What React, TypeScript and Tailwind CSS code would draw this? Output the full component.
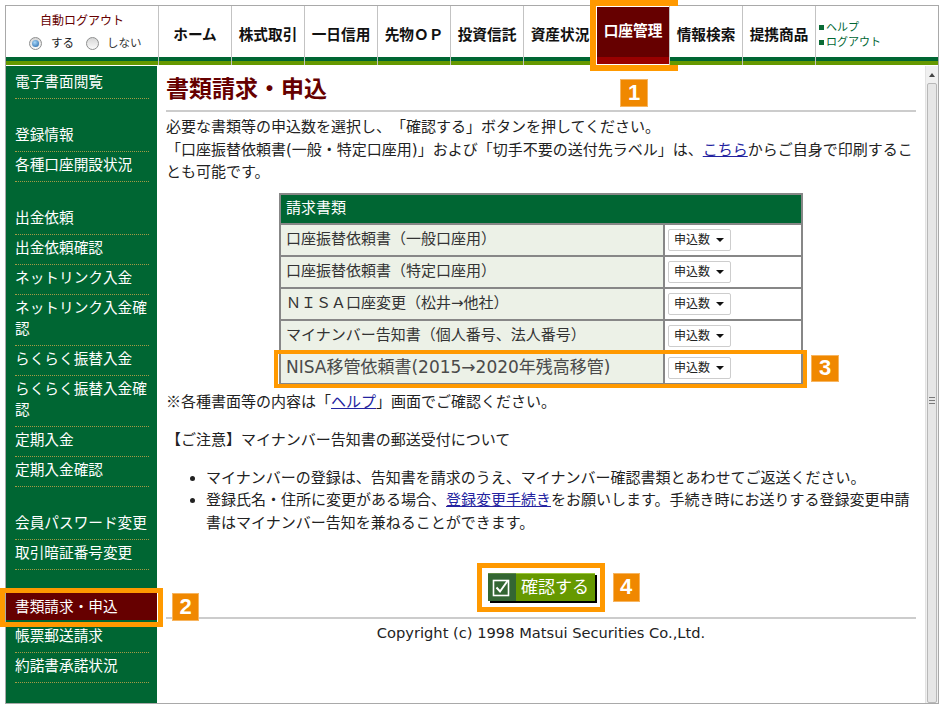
const navItems = ['ホーム', '株式取引', '一日信用', '先物ＯＰ', '投資信託', '資産状況', '口座管理', '情報検索', '提携商品'];

type SideItem = { label: string; active?: boolean } | 'gap';

const sideItems: SideItem[] = [
  { label: '電子書面閲覧' },
  'gap',
  { label: '登録情報' },
  { label: '各種口座開設状況' },
  'gap',
  { label: '出金依頼' },
  { label: '出金依頼確認' },
  { label: 'ネットリンク入金' },
  { label: 'ネットリンク入金確認' },
  { label: 'らくらく振替入金' },
  { label: 'らくらく振替入金確認' },
  { label: '定期入金' },
  { label: '定期入金確認' },
  'gap',
  { label: '会員パスワード変更' },
  { label: '取引暗証番号変更' },
  'gap',
  { label: '書類請求・申込', active: true },
  { label: '帳票郵送請求' },
  { label: '約諾書承諾状況' },
];

const docRows = [
  '口座振替依頼書（一般口座用）',
  '口座振替依頼書（特定口座用）',
  'ＮＩＳＡ口座変更（松井→他社）',
  'マイナンバー告知書（個人番号、法人番号）',
];

function Badge({ n, className }: { n: number; className: string }) {
  return (
    <div
      className={`absolute flex items-center justify-center border border-[#f7b560] bg-[#f08800] font-['Liberation_Sans',sans-serif] text-[22px] font-bold leading-none text-white ${className}`}
    >
      {n}
    </div>
  );
}

function Stripes({ active }: { active?: boolean }) {
  if (active) return <div className="h-[8px] bg-[#990000]" />;
  return (
    <>
      <div className="h-[4px] bg-[#006633]" />
      <div className="h-[4px] bg-[#669900]" />
    </>
  );
}

function Radio({ checked }: { checked?: boolean }) {
  return (
    <span className="flex h-[13px] w-[13px] items-center justify-center rounded-full border border-[#8e8f8f] bg-[linear-gradient(#d6d6d6,#fbfbfb)]">
      {checked && (
        <span className="h-[7px] w-[7px] rounded-full bg-[radial-gradient(circle_at_40%_35%,#a8d8fa,#1b5fa3)]" />
      )}
    </span>
  );
}

function Select() {
  return (
    <div className="flex h-[22px] w-[63px] items-center justify-between rounded-[2px] border border-[#cdcdcd] bg-white pl-[5px] pr-[6px] text-[12px] leading-[16px] text-[#222]">
      <span>申込数</span>
      <span className="h-0 w-0 border-x-[4px] border-t-[4px] border-x-transparent border-t-[#111]" />
    </div>
  );
}

function Header() {
  return (
    <div className="flex h-[59px]">
      {/* auto logout */}
      <div className="flex w-[152px] flex-col">
        <div className="flex h-[51px] flex-col pt-[7px]">
          <div className="text-center text-[12px] leading-[16px] text-[#660000]">自動ログアウト</div>
          <div className="mt-[6px] flex items-center pl-[23px] text-[11.5px] leading-[16px] text-[#222]">
            <Radio checked />
            <span className="ml-[9px]">する</span>
            <span className="ml-[12px]">
              <Radio />
            </span>
            <span className="ml-[8px] text-[#333]">しない</span>
          </div>
        </div>
        <Stripes />
      </div>

      {navItems.map((item) => {
        const active = item === '口座管理';
        return (
          <div key={item} className="relative flex w-[73px] flex-col border-l border-[#c3c3c3]">
            <div
              className={`h-[51px] text-center text-[14.67px] font-bold leading-[21px] ${
                active ? 'bg-[#660000] pt-[14px] text-white' : 'bg-white pt-[18px] text-[#111]'
              }`}
            >
              {item}
            </div>
            <Stripes active={active} />
            {active && (
              <>
                <div className="absolute left-[-7px] top-[-6px] h-[71px] w-[88px] border-[6px] border-[#ff9900] shadow-[inset_0_0_0_1px_#fff]" />
                <Badge n={1} className="left-[23px] top-[73px] h-[28px] w-[28px]" />
              </>
            )}
          </div>
        );
      })}

      {/* help / logout */}
      <div className="flex w-[123px] flex-col border-l border-[#c3c3c3]">
        <div className="h-[51px] pl-[3px] pt-[14px] text-[11px] leading-[15px] text-[#006633]">
          <div className="flex items-center gap-[2px]">
            <span className="h-[5px] w-[5px] bg-[#0b6b36]" />
            ヘルプ
          </div>
          <div className="flex items-center gap-[2px]">
            <span className="h-[5px] w-[5px] bg-[#0b6b36]" />
            ログアウト
          </div>
        </div>
        <Stripes />
      </div>
    </div>
  );
}

function Sidebar() {
  return (
    <div className="w-[151px] bg-[#006633] pt-[3px] text-[14.67px] leading-[21px] text-white">
      {sideItems.map((item, i) => {
        if (item === 'gap') return <div key={i} className="h-[23px]" />;
        if (item.active) {
          return (
            <div key={i} className="relative mb-[3px] flex h-[27px] items-center bg-[#660000] pl-[9px]">
              {item.label}
              <div className="absolute left-[-6px] top-[-5px] h-[39px] w-[163px] border-[5px] border-[#ff9900]" />
              <Badge n={2} className="left-[166px] top-0 h-[28px] w-[27px]" />
            </div>
          );
        }
        return (
          <div key={i} className="ml-[9px] w-[134px] border-b border-dotted border-[#a39a45] pb-[6px] pt-[2px]">
            {item.label}
          </div>
        );
      })}
    </div>
  );
}

function Main() {
  return (
    <div className="flex w-[768px] flex-col px-[9px] pt-[8px] text-[15px] text-[#222]">
      <h1 className="text-[23px] font-bold leading-[30px] text-[#660000]">書類請求・申込</h1>
      <div className="mt-[6px] h-[2px] bg-[#cccccc]" />

      <p className="mt-[4px] leading-[22.5px]">
        必要な書類等の申込数を選択し、「確認する」ボタンを押してください。
        <br />
        「口座振替依頼書(一般・特定口座用)」および「切手不要の送付先ラベル」は、
        <a className="text-[#2323a0] underline">こちら</a>
        からご自身で印刷することも可能です。
      </p>

      {/* document table */}
      <div className="relative mx-auto mt-[9px] w-[524px] bg-[#878787] p-[2px]">
        <div className="flex h-[28px] items-center bg-[#006633] pl-[5px] leading-[21px] text-white">請求書類</div>
        {docRows.map((row) => (
          <div key={row} className="mt-[2px] flex h-[30px] gap-[2px]">
            <div className="flex w-[382px] items-center bg-[#ecf1e7] pl-[5px] leading-[21px] text-[#333]">{row}</div>
            <div className="flex flex-1 items-center bg-white pl-[3px]">
              <Select />
            </div>
          </div>
        ))}
        <div className="mt-[2px] flex h-[30px] gap-[2px]">
          <div className="flex w-[382px] items-center bg-[#ecf1e7] pl-[5px] text-[17px] leading-[21px] text-[#4a4a4a]">
            NISA移管依頼書(2015→2020年残高移管)
          </div>
          <div className="flex flex-1 items-center bg-white pl-[3px]">
            <Select />
          </div>
        </div>
        <div className="absolute left-[-5px] top-[157px] h-[38px] w-[533px] border-[4px] border-[#ff9900]" />
        <Badge n={3} className="left-[532px] top-[162px] h-[27px] w-[28px]" />
      </div>

      <p className="mt-[5px] leading-[22.5px]">
        <span className="font-['Noto_Sans_CJK_JP',sans-serif]">※</span>各種書面等の内容は「
        <a className="text-[#2323a0] underline">ヘルプ</a>」画面でご確認ください。
      </p>

      <p className="mt-[15.5px] leading-[22.5px]">【ご注意】マイナンバー告知書の郵送受付について</p>

      <ul className="mt-[15.5px] list-disc pl-[40px] leading-[22.5px]">
        <li>マイナンバーの登録は、告知書を請求のうえ、マイナンバー確認書類とあわせてご返送ください。</li>
        <li>
          登録氏名・住所に変更がある場合、<a className="text-[#2323a0] underline">登録変更手続き</a>
          をお願いします。手続き時にお送りする登録変更申請書はマイナンバー告知を兼ねることができます。
        </li>
      </ul>

      {/* confirm button */}
      <div className="mt-[38.5px] flex justify-center">
        <div className="relative flex h-[28px] w-[107px] shadow-[2px_2px_0_#000]">
          <div className="flex w-[28px] items-center justify-center border-t border-[#5d8a45] bg-[#336633]">
            <svg width="19" height="20" viewBox="0 0 19 20" fill="none">
              <rect x="1.5" y="3.5" width="15" height="15" stroke="#fff" strokeWidth="1.6" />
              <path d="M4.5 10.5 L8 14.5 L15.5 4" stroke="#fff" strokeWidth="2" />
            </svg>
          </div>
          <div className="flex flex-1 items-center justify-center border-t border-[#9cc63a] bg-[#669900] text-[17px] leading-[22px] text-white">
            確認する
          </div>
          <div className="absolute left-[-11px] top-[-10px] h-[49px] w-[128px] border-[5px] border-[#ff9900]" />
          <Badge n={4} className="left-[125px] top-0 h-[29px] w-[27px]" />
        </div>
      </div>

      <div className="mt-[16px] h-[2px] bg-[#cccccc]" />
      <p className="mt-[3px] text-center text-[14.67px] leading-[22.5px] text-[#222]">
        Copyright (c) 1998 Matsui Securities Co.,Ltd.
      </p>
    </div>
  );
}

function Scrollbar() {
  return (
    <div className="flex w-[13px] flex-col border-l border-[#e3e3e3] bg-[#f0f0f0]">
      <div className="flex h-[17px] items-center justify-center">
        <span className="h-0 w-0 border-x-[3.5px] border-b-[4px] border-x-transparent border-b-[#444]" />
      </div>
      <div className="mx-[1px] flex flex-1 flex-col items-center gap-[2px] rounded-[2px] border border-[#b8b8b8] bg-[#e6e6e6] pt-[313px]">
        <span className="h-[1px] w-[6px] bg-[#7a7a7a]" />
        <span className="h-[1px] w-[6px] bg-[#7a7a7a]" />
        <span className="h-[1px] w-[6px] bg-[#7a7a7a]" />
      </div>
    </div>
  );
}

export default function App() {
  return (
    <div className="h-[705px] w-[941px] overflow-hidden bg-white pl-[5px] pt-[5px] font-['DejaVu_Sans','Noto_Sans_CJK_JP',sans-serif] text-[#222] [text-spacing-trim:space-all]">
      <div className="flex h-[699px] w-[934px] flex-col border border-[#a9a9a9]">
        <Header />
        <div className="h-[1px] bg-white" />
        <div className="flex min-h-0 flex-1">
          <Sidebar />
          <Main />
          <Scrollbar />
        </div>
      </div>
    </div>
  );
}
